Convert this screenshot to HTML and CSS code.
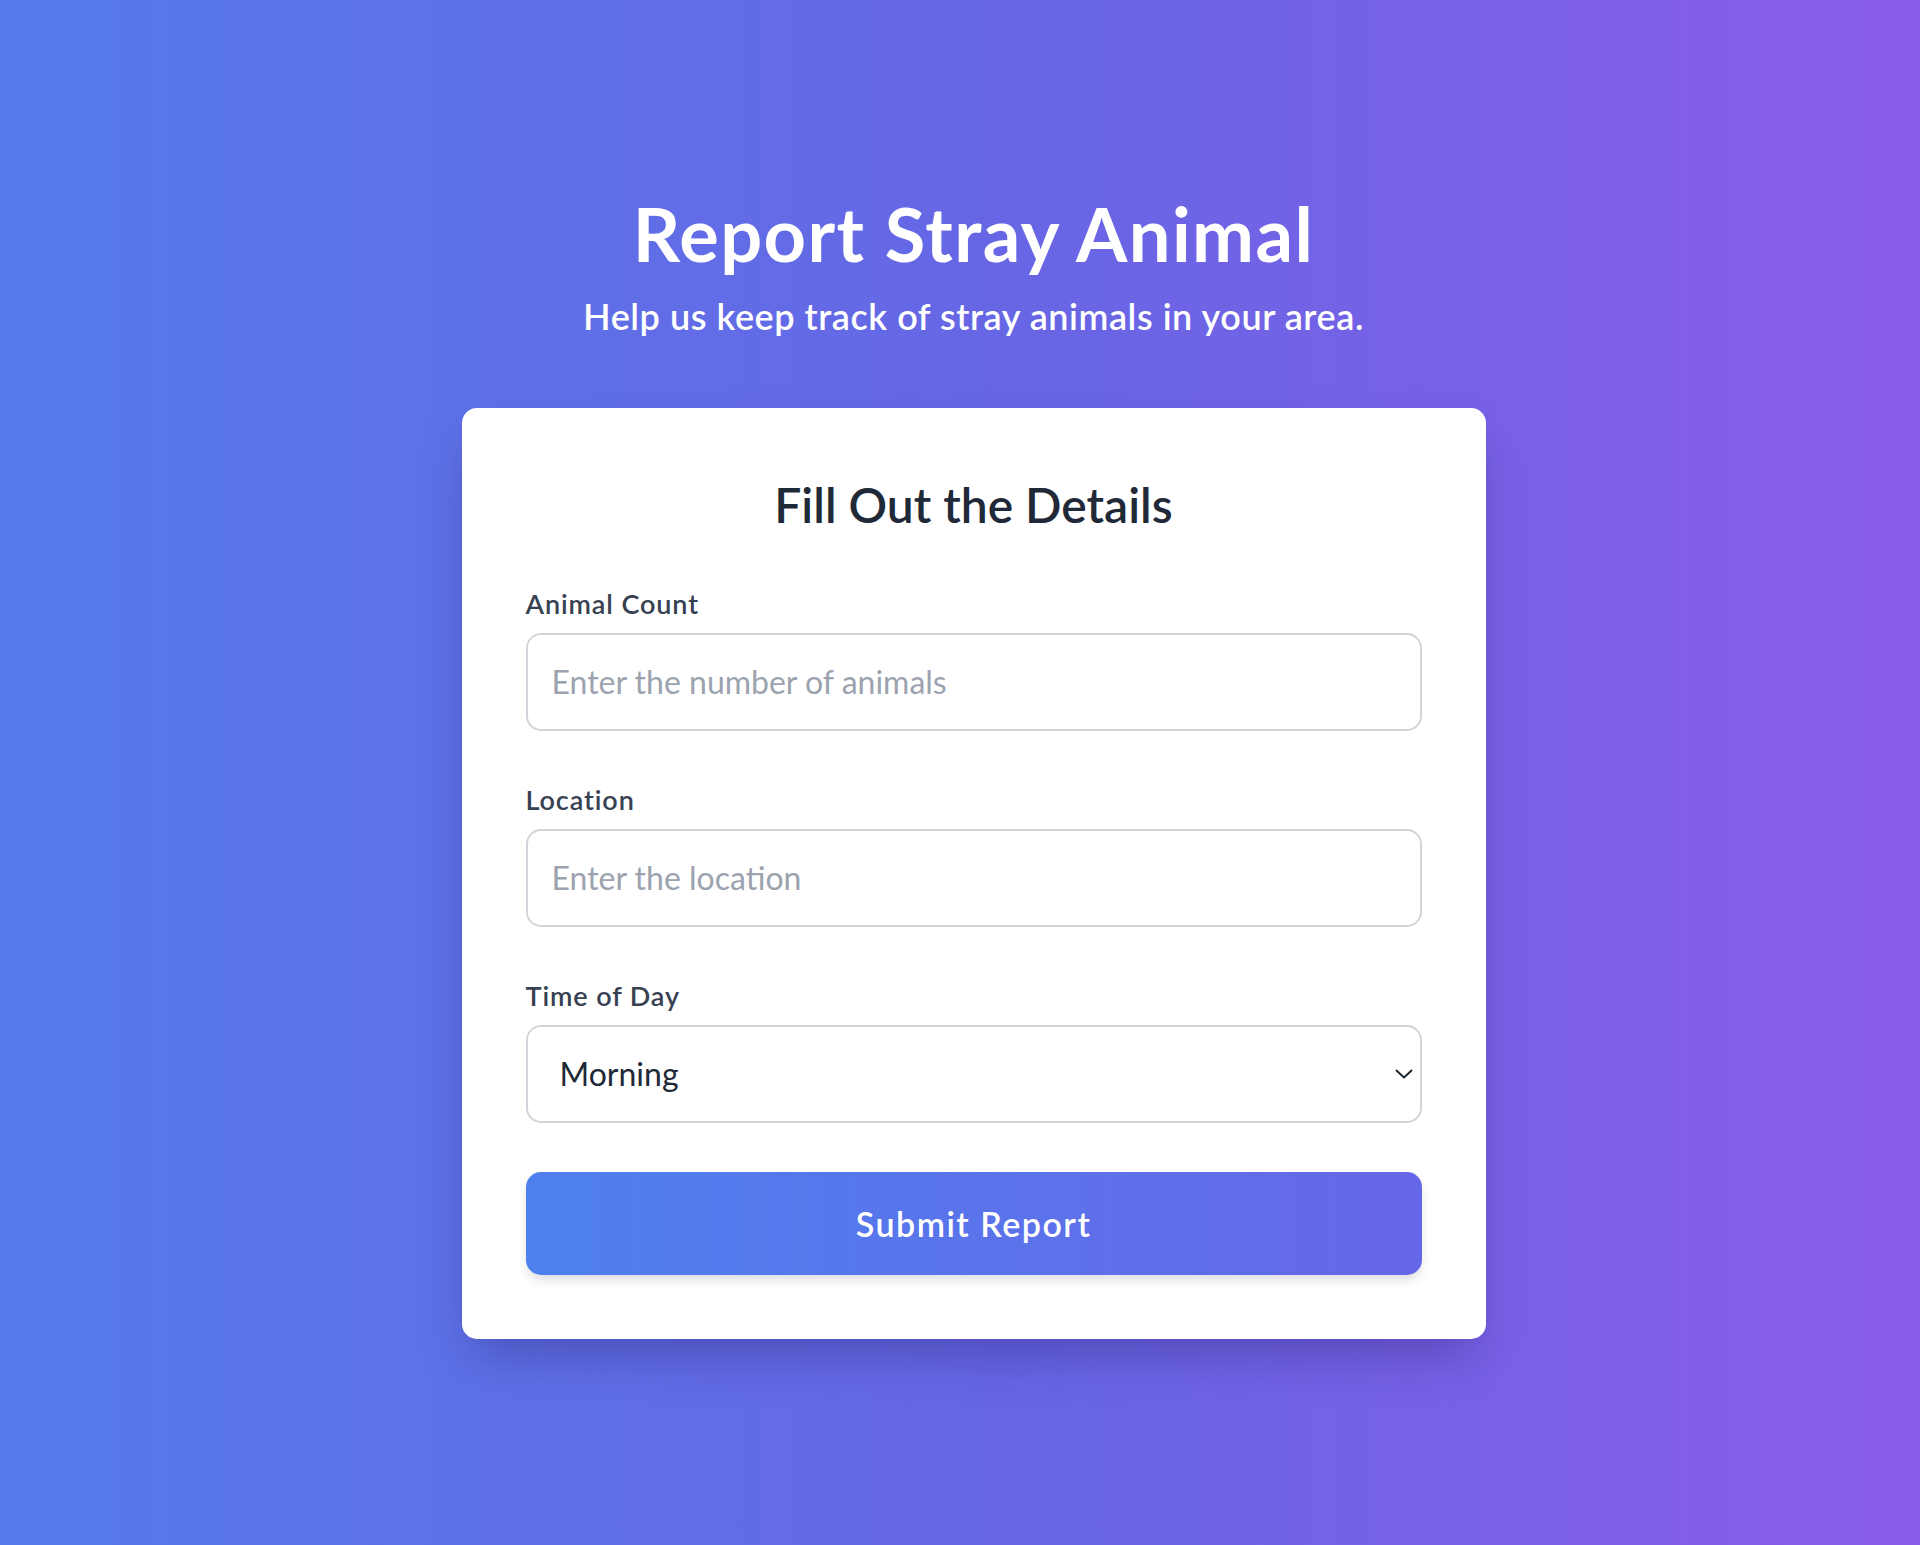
FILE: index.html
```html
<!DOCTYPE html>
<html lang="en">
<head>
<meta charset="utf-8">
<title>Report Stray Animal</title>
<link rel="stylesheet" href="styles.css">
</head>
<body>
<main class="page">
  <header class="hero">
    <h1 class="hero-title">Report Stray Animal</h1>
    <p class="hero-sub">Help us keep track of stray animals in your area.</p>
  </header>
  <section class="card">
    <h2 class="card-title">Fill Out the Details</h2>
    <form class="form">
      <div class="field">
        <label class="label" for="count">Animal Count</label>
        <input class="control" id="count" type="number" placeholder="Enter the number of animals">
      </div>
      <div class="field">
        <label class="label" for="loc">Location</label>
        <input class="control" id="loc" type="text" placeholder="Enter the location">
      </div>
      <div class="field">
        <label class="label" for="time">Time of Day</label>
        <div class="select-wrap">
          <select class="control select" id="time">
            <option>Morning</option>
            <option>Afternoon</option>
            <option>Evening</option>
            <option>Night</option>
          </select>
          <svg class="chevron" width="18" height="10" viewBox="0 0 18 10" aria-hidden="true"><path d="M1.5 1.5 L9 8.5 L16.5 1.5" fill="none" stroke="#1f2937" stroke-width="2" stroke-linecap="round" stroke-linejoin="round"/></svg>
        </div>
      </div>
      <button class="submit" type="button">Submit Report</button>
    </form>
  </section>
</main>
</body>
</html>
```
FILE: styles.css
```css
* { box-sizing: border-box; }
html, body { margin: 0; padding: 0; }
body {
  min-height: 1545px;
  font-family: "Lato", "Open Sans", sans-serif;
  background: linear-gradient(to right, #557ae9 0%, #6766e5 53%, #8a5ce8 100%);
}
.page {
  display: flex;
  flex-direction: column;
  align-items: center;
  padding: 191px 0 150px 27px;
}
.hero { text-align: center; color: #fff; }
.hero-title {
  margin: 0;
  font-size: 74px;
  line-height: 86px;
  font-weight: 700;
  letter-spacing: 1.4px;
}
.hero-sub {
  margin: 12px 0 0;
  font-size: 36px;
  line-height: 54px;
  font-weight: 600;
  letter-spacing: 0.55px;
}
.card {
  margin-top: 65px;
  width: 1024px;
  background: #fff;
  border-radius: 15px;
  padding: 64px;
  box-shadow: 0 25px 50px -12px rgba(30, 20, 90, 0.35);
}
.card-title {
  margin: 0;
  text-align: center;
  font-size: 48px;
  line-height: 65px;
  font-weight: 600;
  color: #1f2937;
}
.form {
  display: flex;
  flex-direction: column;
  gap: 49.5px;
  margin-top: 47px;
}
.field { display: flex; flex-direction: column; gap: 8px; }
.label {
  font-size: 27px;
  line-height: 40.5px;
  font-weight: 600;
  letter-spacing: 0.9px;
  color: #374151;
}
.control {
  width: 100%;
  height: 98px;
  border: 2px solid #d1d5db;
  border-radius: 15px;
  padding: 0 24px;
  font-family: inherit;
  font-size: 32px;
  color: #1f2937;
  background: #fff;
  outline: none;
}
.control::placeholder { color: #9ca3af; }
.select-wrap { position: relative; }
.select {
  appearance: none;
  -webkit-appearance: none;
  padding-left: 32px;
}
.chevron {
  position: absolute;
  right: 9px;
  top: 44px;
  pointer-events: none;
}
.submit {
  height: 103px;
  border: none;
  border-radius: 15px;
  background: linear-gradient(to right, #4e80ee, #6667e8);
  color: #fff;
  font-family: inherit;
  font-size: 34px;
  font-weight: 600;
  letter-spacing: 1.5px;
  box-shadow: 0 6px 12px -2px rgba(0, 0, 0, 0.15);
  cursor: pointer;
}
```
